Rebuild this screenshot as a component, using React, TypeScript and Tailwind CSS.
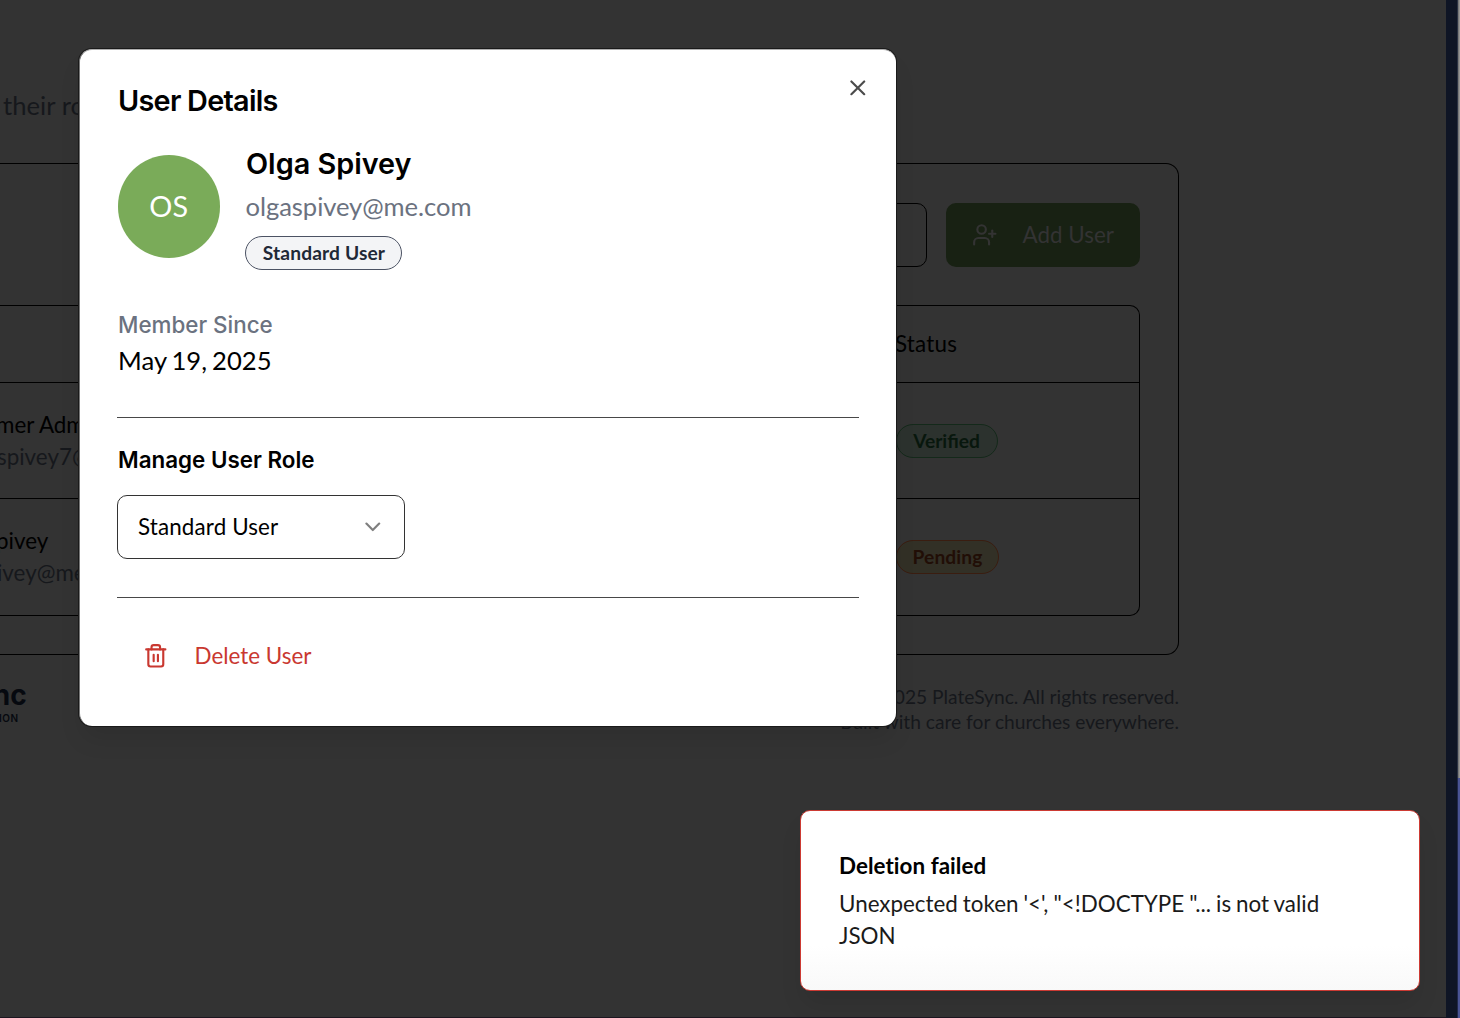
import React from "react";
import { ChevronDown, Trash2, UserPlus, X } from "lucide-react";

const inter = "font-['Inter',sans-serif]";

function Person({ name, email }: { name: string; email: string }) {
  return (
    <div className="-ml-1 flex w-[900px] flex-col justify-center leading-8 whitespace-nowrap">
      <span className="text-black">{name}</span>
      <span className="ml-px text-[#16181c]">{email}</span>
    </div>
  );
}

function UsersPage() {
  return (
    <main className="flex h-full w-[1446px] flex-col overflow-hidden border-b border-[#1c1620] bg-[#333333] text-[22.4px]">
      <p className="mt-[85px] h-10 pl-[3px] text-[25.6px] leading-10 tracking-[0.05px] text-[#16181c]">their roles</p>
      <section className="mt-[38px] flex h-[492px] w-[1179px] shrink-0 flex-col rounded-r-[13px] border border-l-0 border-black pt-[39px] pr-[38px]">
        <div className="flex h-16 gap-[19px]">
          {/* the search field's outline starts underneath the dialog */}
          <div className="ml-[500px] h-16 w-[427px] rounded-[10px] border border-black" />
          <button className="flex h-16 w-[194px] items-center rounded-[10px] bg-[#182113] pl-[26px] text-[#333]">
            <UserPlus size={25.6} strokeWidth={2} />
            <span className="ml-[25px]">Add User</span>
          </button>
        </div>
        <div className="mt-[38px] h-[311px] w-[1140px] rounded-r-[10px] border border-l-0 border-black">
          <div className="flex h-[77px] items-center border-b border-black pl-[895px] text-black">
            <span className="tracking-[0.2px]">Status</span>
          </div>
          <div className="flex h-[116px] items-center border-b border-black">
            <Person name="mer Admin" email="spivey7@" />
            <span className="flex h-[34px] w-[102px] items-center justify-center rounded-full border border-[#14291a] bg-[#2c322e] pt-px pr-px text-[19.2px] font-bold text-[#08170d]">
              Verified
            </span>
          </div>
          <div className="flex h-[116px] items-center">
            <Person name="pivey" email="ivey@me.com" />
            <span className="flex h-[34px] w-[103px] items-center justify-center rounded-full border border-[#3a1d10] bg-[#323026] text-[19.2px] font-bold tracking-[0.1px] text-[#210e06]">
              Pending
            </span>
          </div>
        </div>
      </section>
      <footer className="mt-[26px] flex w-[1179px] justify-between text-[#16181c]">
        <div className={`${inter} -ml-[24px] flex flex-col font-bold text-[#06090f]`}>
          <span className="text-[28px] leading-[28px]">ync</span>
          <span className="mt-[4px] ml-[23px] text-[10px] leading-[10px] font-semibold tracking-[0.5px]">ION</span>
        </div>
        <div className="mt-[3px] text-right text-[19.2px] leading-[25px]">
          <p>© 2025 PlateSync. All rights reserved.</p>
          <p>Built with care for churches everywhere.</p>
        </div>
      </footer>
    </main>
  );
}

function UserDialog() {
  return (
    <div
      role="dialog"
      className="absolute top-[49px] left-[79px] flex h-[677px] w-[817px] flex-col rounded-[13px] border-t border-l border-t-[#b0b0b0] border-l-[#777] bg-white pl-[37px] text-black shadow-[0_0_0_1px_#1a1a1a,0_16px_24px_-4px_rgba(0,0,0,0.1)]"
    >
      <button className="absolute top-[25px] right-[25px] text-black opacity-70">
        <X size={25.6} strokeWidth={2} />
      </button>
      <h2 className={`${inter} mt-[35px] ml-px h-8 text-[28.8px] leading-8 font-semibold tracking-[-0.72px]`}>User Details</h2>
      <div className="mt-[27px] flex h-[128px]">
        <div className="mt-[11.4px] ml-[0.5px] flex size-[102.4px] items-center justify-center rounded-full bg-[#7aab59] text-[28.8px] text-white">OS</div>
        <div className="ml-[25.6px]">
          <h3 className={`${inter} ml-[0.5px] h-10 text-[28.8px] leading-10 font-semibold`}>Olga Spivey</h3>
          <p className="mt-[2px] h-10 text-[25.6px] leading-10 tracking-[-0.06px] text-[#6b7280]">olgaspivey@me.com</p>
          <span className="mt-[10px] flex h-[34px] w-[157px] items-center justify-center rounded-full border border-[#4b5263] bg-[#f3f4f6] text-[19.2px] font-bold tracking-[0.14px] text-[#1f2937]">
            Standard User
          </span>
        </div>
      </div>
      <h4 className={`${inter} mt-[37px] ml-px h-8 text-[22.4px] leading-8 font-medium text-[#6b7280]`}>Member Since</h4>
      <p className="-mt-px ml-px h-10 text-[25.6px] leading-10 tracking-[0.08px] [word-spacing:-1.8px]">May 19, 2025</p>
      <hr className="mt-[37px] w-[742px] shrink-0 border-[#484848]" />
      <h4 className={`${inter} mt-[26px] ml-px h-8 text-[22.4px] leading-8 font-semibold`}>Manage User Role</h4>
      <button className="mt-[19px] flex h-16 w-[288px] items-center justify-between rounded-[10px] border border-[#333] pr-[18px] pl-[20px] text-[22.4px]">
        <span className="tracking-[0.14px]">Standard User</span>
        <ChevronDown size={25.6} strokeWidth={2} className="opacity-50" />
      </button>
      <hr className="mt-[38px] w-[742px] shrink-0 border-[#484848]" />
      <button className="mt-[26px] flex h-16 items-center pl-[26px] text-[22.4px] text-[#c93830]">
        <Trash2 size={25.6} strokeWidth={2} />
        <span className="ml-[26px]">Delete User</span>
      </button>
    </div>
  );
}

function Toast() {
  return (
    <div
      role="status"
      className="absolute top-[810px] left-[800px] flex h-[181px] w-[620px] flex-col rounded-[10px] border border-[#cc3a33] bg-linear-to-b from-white from-75% to-[#f9f9f9] pt-[39px] pl-[38px] text-[22.4px] leading-8 shadow-[0_16px_24px_-4px_rgba(0,0,0,0.1)] [font-variant-ligatures:none]"
    >
      <strong className="font-bold tracking-[0.05px] text-black">Deletion failed</strong>
      <p className="mt-[6px] w-[500px] text-[#1a1a1a] [word-spacing:-0.75px]">{`Unexpected token '<', "<!DOCTYPE "... is not valid JSON`}</p>
    </div>
  );
}

export default function App() {
  return (
    <div className="relative flex h-[1018px] w-[1460px] overflow-hidden bg-[#0f1525] font-['Lato',sans-serif]">
      <UsersPage />
      <div className="w-[11px] bg-[#0f1525]" />
      <div className="flex w-[3px] flex-col">
        <div className="h-[778px] border-l border-[#2c3344] bg-linear-to-r from-[#6c6c6c] to-[#a4a4a4]" />
        <div className="flex-1 border-l border-[#20284a] bg-[#4a5494]" />
      </div>
      <UserDialog />
      <Toast />
    </div>
  );
}
